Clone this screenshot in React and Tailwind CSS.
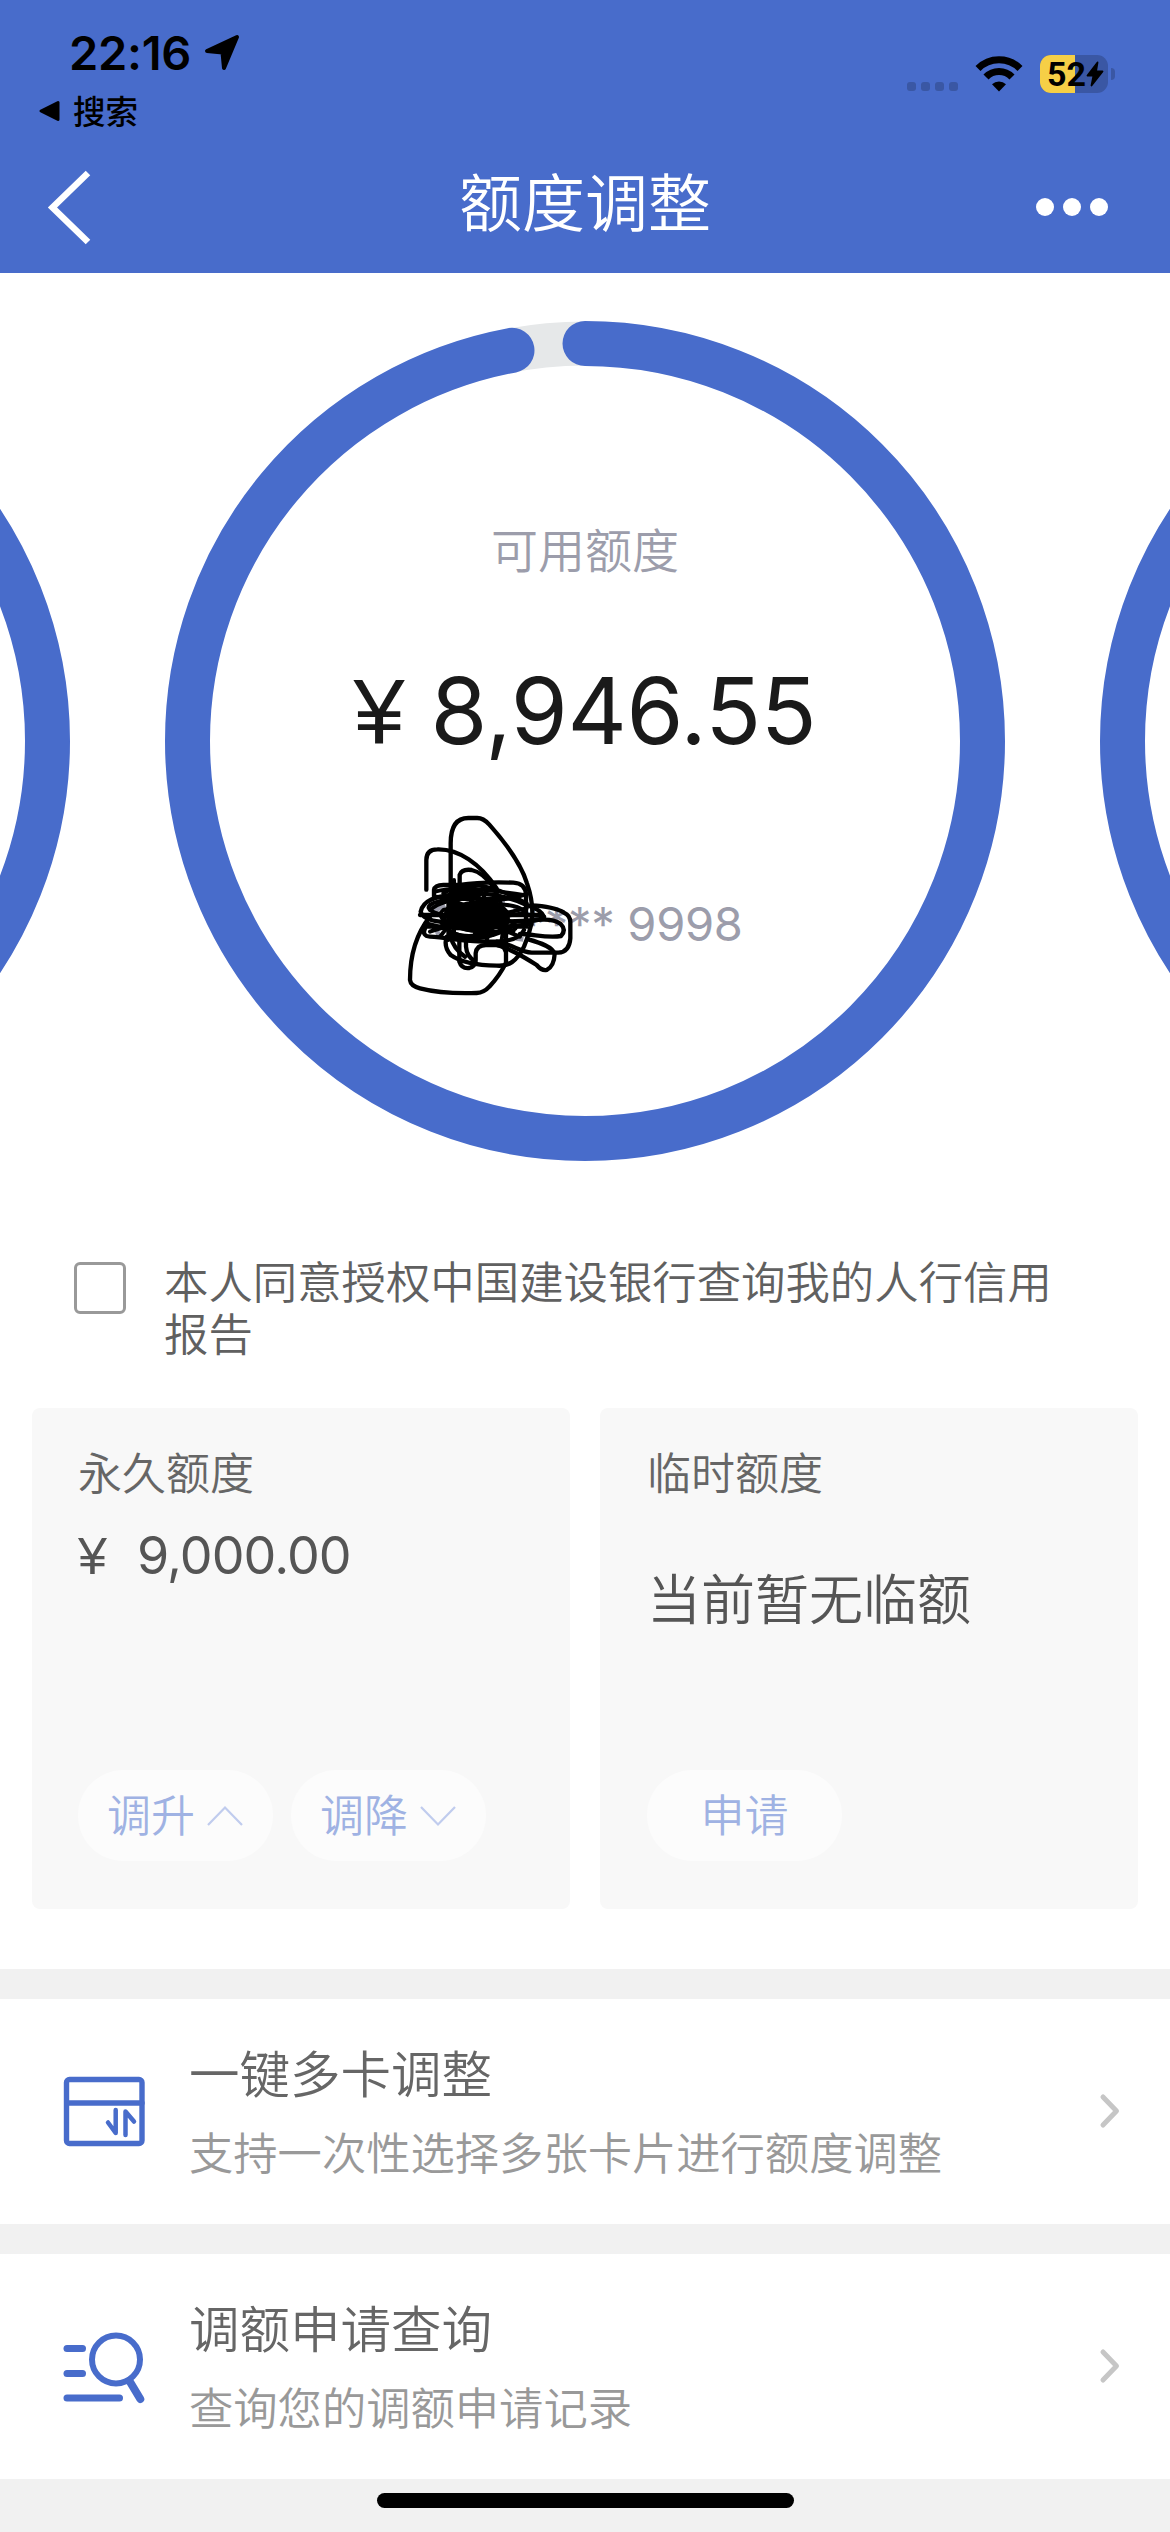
import React, { useState } from 'react';

const RING_RADIUS = 397.5;
const RING_LENGTH = 2 * Math.PI * RING_RADIUS;

function StatusBar() {
  return (
    <div className="flex justify-between h-[140px]">
      <div className="pl-[38px] pt-[29px]">
        <div className="flex items-center h-[48px] pl-[31px]">
          <span className="w-[134px] font-['Inter'] font-semibold text-[47px] leading-[48px] tracking-[-0.300px]">22:16</span>
          <svg className="w-[38px] h-[38px]" viewBox="0 0 38 38">
            <path d="M34 3 L21 34 L19.500 18.500 L4 17 Z" fill="#000" stroke="#000" strokeWidth="4" strokeLinejoin="round" />
          </svg>
        </div>
        <div className="flex items-center h-[40px] mt-[14px]">
          <svg className="w-[23px] h-[22px] mr-[12px]" viewBox="0 0 23 22">
            <path d="M3 11 L20 2.500 V19.500 Z" fill="#000" stroke="#000" strokeWidth="3" strokeLinejoin="round" />
          </svg>
          <span className="-mt-[3px] text-[32.500px] leading-[40px] font-medium">搜索</span>
        </div>
      </div>

      <div className="flex h-[38px] mt-[55px] pr-[62px]">
        <div className="flex gap-[5px] pt-[27px] mr-[16px]">
          {[0, 1, 2, 3].map((i) => (
            <span key={i} className="w-[9px] h-[9px] rounded-[3px] bg-[#3a57a4]" />
          ))}
        </div>
        <svg className="w-[50px] h-[38px] mr-[16px]" viewBox="0 0 50 38">
          <path d="M4 13.500 A29.500 29.500 0 0 1 46 13.500" fill="none" stroke="#000" strokeWidth="7" />
          <path d="M12 22 A18 18 0 0 1 38 22" fill="none" stroke="#000" strokeWidth="7" />
          <path d="M25 36.500 L18 29.300 A10 10 0 0 1 32 29.300 Z" fill="#000" />
        </svg>
        <div className="relative w-[68px] h-[38px] rounded-[11px] overflow-hidden bg-[#3a57a4]">
          <div className="w-[35px] h-[38px] bg-[#f6cf46]" />
          <div className="absolute inset-0 flex items-center pl-[7px]">
            <span className="w-[39px] font-['Roboto'] font-bold text-[34px] leading-[38px]">52</span>
            <svg className="w-[18px] h-[26px]" viewBox="0 0 18 26">
              <path d="M11.500 1.500 L1.500 14.500 H7.500 L5.500 24.500 L16.500 10.500 H10 Z" fill="#000" stroke="#000" strokeWidth="1.800" strokeLinejoin="round" />
            </svg>
          </div>
        </div>
        <span className="w-[4px] h-[12px] mt-[13px] ml-[3px] -mr-[7px] rounded-r-full bg-[#3a57a4]" />
      </div>
    </div>
  );
}

function Header() {
  return (
    <div className="grid grid-cols-3 items-center h-[133px]">
      <svg className="w-[48px] h-[76px] ml-[44px]" viewBox="0 0 48 76">
        <path d="M44 4 L8.500 38.500 L44 73" fill="none" stroke="#fff" strokeWidth="6.500" />
      </svg>
      <h1 className="text-center text-white text-[63px] leading-[80px] -mt-[15px]">额度调整</h1>
      <div className="flex justify-end gap-[9px] pr-[62px]">
        <span className="w-[18px] h-[18px] rounded-full bg-white" />
        <span className="w-[18px] h-[18px] rounded-full bg-white" />
        <span className="w-[18px] h-[18px] rounded-full bg-white" />
      </div>
    </div>
  );
}

function Ring({ percent }) {
  return (
    <svg className="w-[840px] h-[840px] shrink-0" viewBox="0 0 840 840">
      <circle cx="420" cy="420" r={RING_RADIUS} fill="none" stroke="#e6e8e9" strokeWidth="44" />
      <circle
        cx="420"
        cy="420"
        r={RING_RADIUS}
        fill="none"
        stroke="#486ccb"
        strokeWidth="45"
        strokeLinecap="round"
        strokeDasharray={`${RING_LENGTH * percent} ${RING_LENGTH}`}
        transform="rotate(-90 420 420)"
      />
    </svg>
  );
}

// Coretan hitam yang menutupi nama kartu
function Scribble() {
  return (
    <svg className="absolute left-[215px] top-[459px] w-[400px] h-[240px]" viewBox="0 0 1200 720">
      <g fill="none" stroke="#9c9dab" strokeWidth="14">
        <path d="M158 395 L195 375 M165 440 L178 470 M400 385 L440 392 M408 475 L430 478 M330 365 H375" />
      </g>
      <g fill="none" stroke="#000" strokeWidth="13" strokeLinecap="round" strokeLinejoin="round">
        <path d="M139 329 V240 Q139 208 172 208 C235 206 300 250 350 325" />
        <path d="M212 440 V190 Q212 114 265 114 H292 Q310 114 328 134 C385 198 424 255 441 310 C472 400 452 450 432 500 C410 545 385 560 350 557 C290 556 240 545 212 525 Q190 500 200 470" />
        <path d="M239 330 V285 Q245 266 275 270 C310 278 325 305 350 330" />
        <path d="M150 410 C110 460 90 520 90 600 Q92 618 120 625 C170 638 230 641 290 639 Q312 638 328 620 C350 597 365 575 378 548 V440" />
        <path d="M162 350 V330 Q165 315 190 315 H240 Q300 305 400 308 Q437 310 438 345 V430" />
        <path d="M452 376 C500 378 530 384 552 398 Q572 406 571 430 V475 Q568 516 535 518 H455 C420 515 400 495 350 485" />
        <path d="M430 430 C470 415 520 415 542 432 Q560 450 543 468 C500 475 460 462 420 462" />
        <path d="M445 478 C480 488 518 500 524 522 Q522 560 500 570 Q485 573 470 555 C430 530 390 505 340 492" />
        <path d="M120 405 H470 Q495 405 492 412 C480 425 400 425 330 425 H180 Q130 420 122 395 C130 360 170 350 210 345 C280 330 380 345 440 375 Q485 390 492 410" />
        <path d="M135 445 Q125 468 150 470 C220 475 290 490 360 484 Q420 480 432 450" />
        <path d="M238 480 V545 Q245 567 268 564 Q285 560 287 540 V520 Q290 494 320 495 H350 Q372 495 376 512" />
        <path d="M258 475 V500 Q260 530 286 545 M212 470 Q220 505 255 530" />
      </g>
      <g fill="none" stroke="#000" strokeWidth="12" strokeLinecap="round" strokeLinejoin="round">
        <path d="M165 335 C220 320 300 325 430 345 C360 370 200 340 150 375 C120 400 250 430 430 400 C440 370 300 360 190 390 C150 420 260 470 400 450 C440 430 330 390 220 400" />
        <path d="M150 390 C200 345 340 340 380 395 C400 450 330 480 250 475 C190 465 180 410 215 370 C250 340 330 350 350 410 C350 460 280 480 220 460" />
        <path d="M222 300 V470 M205 350 V480 M240 320 C280 350 300 420 280 480 M260 320 L320 470 M300 330 C330 370 340 440 320 480 M350 340 Q380 400 365 480" />
        <path d="M135 440 H445 M140 430 C220 455 320 445 455 432 M150 455 C220 430 330 410 440 385 M180 470 C230 400 300 360 400 355 M200 355 C260 400 340 440 420 470" />
        <path d="M190 340 C260 300 330 310 440 370 M170 350 C230 360 320 400 400 455 M185 430 C215 480 330 485 390 440" />
      </g>
      <ellipse cx="290" cy="410" rx="90" ry="48" fill="#000" />
      <ellipse cx="262" cy="340" rx="44" ry="24" fill="#000" />
    </svg>
  );
}

function LimitCarousel() {
  return (
    <div className="flex justify-center gap-[95px] pt-[48px] w-full overflow-hidden">
      <Ring percent={1} />
      <div className="relative w-[840px] h-[840px] shrink-0">
        <Ring percent={0.9702} />
        <div className="absolute inset-0 flex flex-col items-center">
          <p className="mt-[197px] text-[47px] leading-[60px] text-[#9c9dab]">可用额度</p>
          <div className="flex items-baseline mt-[83px] text-[#1a1a1a]">
            <span className="w-[77px] font-['Liberation_Sans'] text-[92px] leading-[100px]">¥</span>
            <span className="font-['Inter'] font-normal text-[92px] leading-[100px] tracking-[-0.300px]">8,946.55</span>
          </div>
          <p className="mt-[132px] ml-[94px] font-['Inter'] font-normal text-[47px] leading-[60px] tracking-[-0.300px] text-[#9c9dab] whitespace-pre">**** 9998</p>
        </div>
        <Scribble />
      </div>
      <Ring percent={1} />
    </div>
  );
}

function Agreement() {
  const [checked, setChecked] = useState(false);

  return (
    <div className="flex mt-[92px] pl-[74px] h-[155px]">
      <button
        onClick={() => setChecked(!checked)}
        className="w-[52px] h-[52px] mt-[9px] shrink-0 rounded-[6px] border-3 border-[#999999] bg-white"
      >
        {checked && <span className="block w-6 h-6 mx-auto bg-[#486ccb]" />}
      </button>
      <p className="ml-[38px] mt-[1px] w-[900px] text-[44.400px] leading-[52px] text-[#606060]">
        本人同意授权中国建设银行查询我的人行信用报告
      </p>
    </div>
  );
}

function PillButton({ label, arrow }) {
  return (
    <button className="flex items-center justify-center w-[195px] h-[91px] rounded-full bg-[#fcfcfc] text-[44px] leading-[60px] text-[#9fb2e3]">
      <span className="-mt-[6px]">{label}</span>
      {arrow && (
        <svg className="w-[38px] h-[22px] ml-[11px]" viewBox="0 0 38 22">
          <path d={arrow === 'up' ? 'M2 20 L19 2.500 L36 20' : 'M2 2 L19 19.500 L36 2'} fill="none" stroke="#c0ccee" strokeWidth="2.200" />
        </svg>
      )}
    </button>
  );
}

function LimitCards() {
  return (
    <div className="flex gap-[30px] px-[32px]">
      <div className="flex flex-col w-[538px] h-[501px] rounded-[8px] bg-[#f8f8f8] pl-[46px] pb-[48px]">
        <p className="mt-[33px] text-[44px] leading-[60px] text-[#666666]">永久额度</p>
        <div className="flex items-baseline mt-[23px] text-[#555555]">
          <span className="w-[59px] font-['Liberation_Sans'] text-[52px] leading-[64px]">¥</span>
          <span className="font-['Inter'] font-normal text-[52px] leading-[64px] tracking-[-0.900px]">9,000.00</span>
        </div>
        <div className="flex gap-[18px] mt-auto">
          <PillButton label="调升" arrow="up" />
          <PillButton label="调降" arrow="down" />
        </div>
      </div>

      <div className="flex flex-col w-[538px] h-[501px] rounded-[8px] bg-[#f8f8f8] pl-[47px] pb-[48px]">
        <p className="mt-[33px] text-[44px] leading-[60px] text-[#666666]">临时额度</p>
        <p className="mt-[60px] text-[54px] leading-[72px] text-[#555555]">当前暂无临额</p>
        <div className="mt-auto">
          <PillButton label="申请" />
        </div>
      </div>
    </div>
  );
}

function MultiCardIcon() {
  return (
    <svg className="w-[84px] h-[84px]" viewBox="0 0 84 84" fill="none" stroke="#486ccb" strokeWidth="5.400" strokeLinecap="round" strokeLinejoin="round">
      <rect x="4.500" y="9.500" width="75.500" height="64" rx="3" />
      <path d="M5 33 H80" />
      <path d="M53.700 40 V63 L46 52.500" strokeWidth="4.500" />
      <path d="M63.500 65 V41.500 L72 51.500" strokeWidth="4.500" />
    </svg>
  );
}

function QueryIcon() {
  return (
    <svg className="w-[84px] h-[84px]" viewBox="0 0 84 84" fill="none" stroke="#486ccb" strokeWidth="7" strokeLinecap="round">
      <path d="M5 23.500 H20.500" />
      <path d="M5 48.500 H20.500" />
      <path d="M5 73 H57.500" />
      <circle cx="54" cy="34.500" r="24" strokeWidth="6" />
      <path d="M67.500 56 L78.300 74" strokeWidth="8" />
    </svg>
  );
}

function MenuRow({ icon, title, desc }) {
  return (
    <div className="flex items-center h-[225px] bg-white pl-[62px] pr-[48px]">
      {icon}
      <div className="ml-[43px] h-[225px] grow">
        <p className="mt-[38px] text-[50.500px] leading-[68px] text-[#666666]">{title}</p>
        <p className="mt-[16px] text-[44.300px] leading-[60px] text-[#999999]">{desc}</p>
      </div>
      <svg className="w-[24px] h-[38px]" viewBox="0 0 24 38">
        <path d="M5 4 L18.500 18 L5 32" fill="none" stroke="#c6c6c6" strokeWidth="5" strokeLinecap="round" strokeLinejoin="round" />
      </svg>
    </div>
  );
}

export default function App() {
  return (
    <div className="w-[1170px] h-[2532px] overflow-hidden bg-[#f1f1f1] text-black font-[350] font-['Noto_Sans_CJK_SC',sans-serif]">
      <div className="h-[273px] bg-[#486ccb]">
        <StatusBar />
        <Header />
      </div>

      <div className="h-[1696px] bg-white">
        <LimitCarousel />
        <Agreement />
        <LimitCards />
      </div>

      {/* Menu bawah */}
      <div className="flex flex-col gap-[30px] pt-[30px]">
        <MenuRow icon={<MultiCardIcon />} title="一键多卡调整" desc="支持一次性选择多张卡片进行额度调整" />
        <MenuRow icon={<QueryIcon />} title="调额申请查询" desc="查询您的调额申请记录" />
      </div>

      <div className="w-[417px] h-[15px] mt-[14px] mx-auto rounded-full bg-black" />
    </div>
  );
}
